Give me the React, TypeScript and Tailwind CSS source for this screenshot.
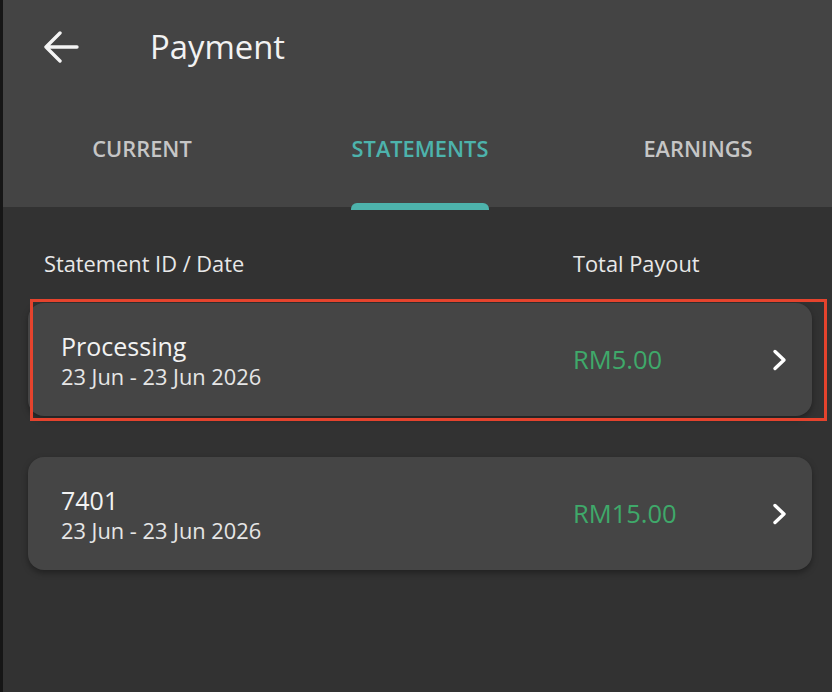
import React from "react";

const font = { fontFamily: '"Open Sans", "Noto Sans", sans-serif' };

function Chevron() {
  return (
    <svg width="20" height="24" viewBox="0 0 20 24" fill="none">
      <path d="M5 3.5 L14 12 L5 20.5" stroke="#ffffff" strokeWidth="3.4" strokeLinecap="round" strokeLinejoin="round" />
    </svg>
  );
}

function Row({ title, date, amount, highlight }: { title: string; date: string; amount: string; highlight?: boolean }) {
  return (
    <div className="relative">
      <div className="flex h-[113px] items-center rounded-[16px] bg-[#454545] pl-[33px] pr-[22px] shadow-[0_3px_6px_rgba(0,0,0,0.35)]">
        <div className="flex flex-1 flex-col pt-[4px]">
          <span className="text-[25px] leading-[31px] text-[#f2f2f2]">{title}</span>
          <span className="text-[21.8px] leading-[30px] text-[#e6e6e6]">{date}</span>
        </div>
        <span className="w-[201px] pl-[4px] text-[25.5px] text-[#3fa96a]">{amount}</span>
        <Chevron />
      </div>
      {highlight && (
        <div className="pointer-events-none absolute left-[2px] top-[-4px] h-[122px] w-[797px] border-[3px] border-[#e5432d]" />
      )}
    </div>
  );
}

export default function App() {
  return (
    <div className="relative h-[692px] w-[832px] overflow-hidden bg-[#161616]" style={font}>
      <div className="absolute left-[3px] top-0 flex h-[692px] w-[834px] flex-col bg-[#323232]">
        <div className="relative flex h-[207px] flex-col bg-[#444444]">
          <div className="flex h-[94px] items-center">
            <div className="ml-[38px] flex h-[40px] w-[40px] items-center justify-center">
              <svg width="36" height="32" viewBox="0 0 36 32" fill="none">
                <path d="M34 16 H3 M17 2 L3 16 L17 30" stroke="#f4f4f4" strokeWidth="3.4" strokeLinecap="round" strokeLinejoin="round" />
              </svg>
            </div>
            <span className="ml-[69px] text-[32.8px] text-[#f2f2f2]">Payment</span>
          </div>
          <div className="grid flex-1 grid-cols-3">
            <div className="flex items-center justify-center pb-[2px]">
              <span className="text-[21.8px] font-semibold text-[#c6c6c6]">CURRENT</span>
            </div>
            <div className="relative flex items-center justify-center pb-[2px]">
              <span className="text-[21.8px] font-semibold text-[#4db3ac]">STATEMENTS</span>
              <div className="absolute bottom-[-3px] left-[70px] h-[7px] w-[138px] rounded-t-[6px] bg-[#4db3ac]" />
            </div>
            <div className="flex items-center justify-center pb-[2px]">
              <span className="text-[21.8px] font-semibold text-[#c6c6c6]">EARNINGS</span>
            </div>
          </div>
        </div>
        <div className="flex flex-col px-[25px]">
          <div className="flex h-[96px] items-center pl-[16px] pt-[19px] text-[21.8px] text-[#e8e8e8]">
            <span className="w-[529px]">Statement ID / Date</span>
            <span>Total Payout</span>
          </div>
          <div className="flex flex-col gap-[41px]">
            <Row title="Processing" date="23 Jun - 23 Jun 2026" amount="RM5.00" highlight />
            <Row title="7401" date="23 Jun - 23 Jun 2026" amount="RM15.00" />
          </div>
        </div>
      </div>
    </div>
  );
}
